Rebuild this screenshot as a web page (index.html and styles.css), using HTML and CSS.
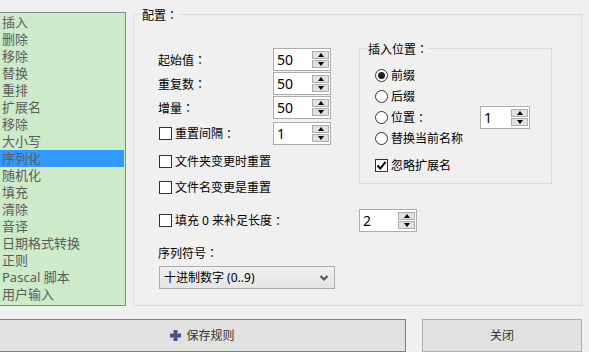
FILE: index.html
```html
<!DOCTYPE html>
<html lang="zh-CN">
<head>
  <meta charset="UTF-8" />
  <title>序列化</title>
  <link rel="stylesheet" href="styles.css">
</head>
<body>
  <div class="window">
    <div class="main">
      <ul class="rule-list">
        <li>插入</li>
        <li>删除</li>
        <li>移除</li>
        <li>替换</li>
        <li>重排</li>
        <li>扩展名</li>
        <li>移除</li>
        <li>大小写</li>
        <li class="selected">序列化</li>
        <li>随机化</li>
        <li>填充</li>
        <li>清除</li>
        <li>音译</li>
        <li>日期格式转换</li>
        <li>正则</li>
        <li>Pascal 脚本</li>
        <li>用户输入</li>
      </ul>

      <div class="group config">
        <span class="legend">配置<span class="colon">：</span></span>
        <div class="config-top">
          <div class="form-col">
            <div class="field">
              <span class="field-label">起始值<span class="colon">：</span></span>
              <div class="spin"><span class="spin-value">50</span><span class="spin-btns"><span class="up"></span><span class="down"></span></span></div>
            </div>
            <div class="field">
              <span class="field-label">重复数<span class="colon">：</span></span>
              <div class="spin"><span class="spin-value">50</span><span class="spin-btns"><span class="up"></span><span class="down"></span></span></div>
            </div>
            <div class="field">
              <span class="field-label">增量<span class="colon">：</span></span>
              <div class="spin"><span class="spin-value">50</span><span class="spin-btns"><span class="up"></span><span class="down"></span></span></div>
            </div>
            <div class="field reset">
              <label class="check field-label"><span class="box"></span>重置间隔<span class="colon">：</span></label>
              <div class="spin"><span class="spin-value">1</span><span class="spin-btns"><span class="up"></span><span class="down"></span></span></div>
            </div>
            <label class="check row-check"><span class="box"></span>文件夹变更时重置</label>
            <label class="check row-check"><span class="box"></span>文件名变更是重置</label>
          </div>

          <div class="group insert">
            <span class="legend">插入位置<span class="colon">：</span></span>
            <div class="radio-row"><span class="radio checked"></span>前缀</div>
            <div class="radio-row"><span class="radio"></span>后缀</div>
            <div class="radio-row">
              <span class="radio"></span>位置<span class="colon">：</span>
              <div class="spin spin-pos"><span class="spin-value">1</span><span class="spin-btns"><span class="up"></span><span class="down"></span></span></div>
            </div>
            <div class="radio-row"><span class="radio"></span>替换当前名称</div>
            <label class="check ext-check">
              <span class="box"><svg width="11" height="11" viewBox="0 0 11 11"><polyline points="1.5,5.5 4.3,8.5 9.5,1.8" fill="none" stroke="#000" stroke-width="2"/></svg></span>忽略扩展名
            </label>
          </div>
        </div>

        <div class="field pad-row">
          <label class="check pad-label"><span class="box"></span>填充 0 来补足长度<span class="colon">：</span></label>
          <div class="spin"><span class="spin-value">2</span><span class="spin-btns"><span class="up"></span><span class="down"></span></span></div>
        </div>

        <div class="seq-label">序列符号<span class="colon">：</span></div>
        <div class="select">
          <span>十进制数字 (0..9)</span>
          <svg width="10" height="8" viewBox="0 0 10 8"><polyline points="1.5,2 5,5.5 8.5,2" fill="none" stroke="#555" stroke-width="2.2"/></svg>
        </div>
      </div>
    </div>

    <div class="buttons">
      <button class="btn btn-save">
        <svg width="11" height="11" viewBox="0 0 11 11"><path d="M3.5 0h4v3.5h3.5v4h-3.5v3.5h-4v-3.5h-3.5v-4h3.5z" fill="#4f5286"/></svg>
        保存规则
      </button>
      <button class="btn btn-close">关闭</button>
    </div>
  </div>
</body>
</html>
```

FILE: styles.css
```css
* { margin: 0; padding: 0; box-sizing: border-box; }
body {
  font-family: "Noto Sans", "Noto Sans CJK SC", sans-serif;
  font-size: 12px;
  line-height: 17px;
  background: #f0f0f0;
  color: #000;
  width: 589px;
  height: 352px;
  overflow: hidden;
  text-spacing-trim: space-all;
}
.colon {
  display: inline-block;
  width: 12px;
  font-family: "Noto Sans CJK TC", sans-serif;
}
.window {
  padding-top: 12px;
}
.main {
  display: flex;
  height: 294px;
}

/* rule list */
.rule-list {
  list-style: none;
  width: 127px;
  margin-left: -1px;
  border: 1px solid #828790;
  background: #cdebca;
  padding: 1px 1px 0 0;
  color: #5c5c5c;
  font-size: 13px;
}
.rule-list li {
  height: 17px;
  padding-left: 2px;
  white-space: nowrap;
}
.rule-list li.selected {
  background: #3399ff;
}

/* group boxes */
.group {
  position: relative;
  border: 1px solid #dcdcdc;
}
.legend {
  position: absolute;
  top: -9px;
  left: 7px;
  padding: 0 1px;
  background: #f0f0f0;
  white-space: nowrap;
}
.config {
  width: 449px;
  margin-left: 7px;
  margin-top: 2px;
  padding: 33px 0 0 24px;
}
.config-top {
  display: flex;
}
.form-col {
  width: 201px;
  display: flex;
  flex-direction: column;
  gap: 1px;
}
.field {
  display: flex;
  align-items: center;
  height: 23px;
}
.field-label {
  width: 115px;
}
.field.reset {
  margin-top: 2px;
}

/* spin box */
.spin {
  display: flex;
  width: 58px;
  height: 23px;
  border: 1px solid #adadad;
  background: #fff;
}
.spin-value {
  flex: 1;
  padding-left: 3px;
  line-height: 21px;
  font-size: 14px;
}
.spin-btns {
  width: 18px;
  display: flex;
  flex-direction: column;
  gap: 1px;
  padding: 2px 1px 2px 0;
}
.spin-btns span {
  flex: 1;
  border: 1px solid #adadad;
  background: #e1e1e1;
  display: flex;
  align-items: center;
  justify-content: center;
}
.spin-btns .up::after,
.spin-btns .down::after {
  content: "";
  border-left: 3px solid transparent;
  border-right: 3px solid transparent;
}
.spin-btns .up::after { border-bottom: 4px solid #000; }
.spin-btns .down::after { border-top: 4px solid #000; }

/* checkbox */
.check {
  display: flex;
  align-items: center;
  white-space: nowrap;
}
.box {
  width: 13px;
  height: 13px;
  border: 1px solid #333;
  background: #fff;
  margin: 0 3px 0 1px;
  display: flex;
  align-items: center;
  justify-content: center;
  flex-shrink: 0;
}
.row-check {
  height: 20px;
  margin-top: 5px;
}

/* insertion group */
.insert {
  width: 193px;
  height: 136px;
  padding: 16px 21px 0 15px;
}
.radio-row {
  display: flex;
  align-items: center;
  height: 21px;
  white-space: nowrap;
}
.radio {
  width: 13px;
  height: 13px;
  border: 1px solid #333;
  border-radius: 50%;
  background: #fff;
  margin-right: 3px;
  display: flex;
  align-items: center;
  justify-content: center;
}
.radio.checked::after {
  content: "";
  width: 7px;
  height: 7px;
  border-radius: 50%;
  background: #222;
}
.spin-pos {
  width: 50px;
  margin-left: auto;
}
.ext-check {
  height: 20px;
  margin-top: 6px;
}
.ext-check .box {
  margin-left: 0;
}

/* bottom rows */
.pad-row {
  margin-top: 12px;
}
.pad-label {
  width: 201px;
}
.seq-label {
  margin-top: 12px;
}
.select {
  width: 176px;
  height: 23px;
  margin: 4px 0 0 1px;
  border: 1px solid #acacac;
  background: linear-gradient(#f0f0f0, #e5e5e5);
  display: flex;
  align-items: center;
  justify-content: space-between;
  padding: 0 5px 0 4px;
}

/* buttons */
.buttons {
  display: flex;
  margin-top: 13px;
}
.btn {
  height: 33px;
  border: 1px solid #adadad;
  background: #e1e1e1;
  font: inherit;
  color: #333;
  display: flex;
  align-items: center;
  justify-content: center;
  gap: 5px;
}
.btn-save {
  width: 407px;
  margin-left: -1px;
  border-color: #3d8ee0;
}
.btn-close {
  width: 160px;
  margin-left: 16px;
}
```
